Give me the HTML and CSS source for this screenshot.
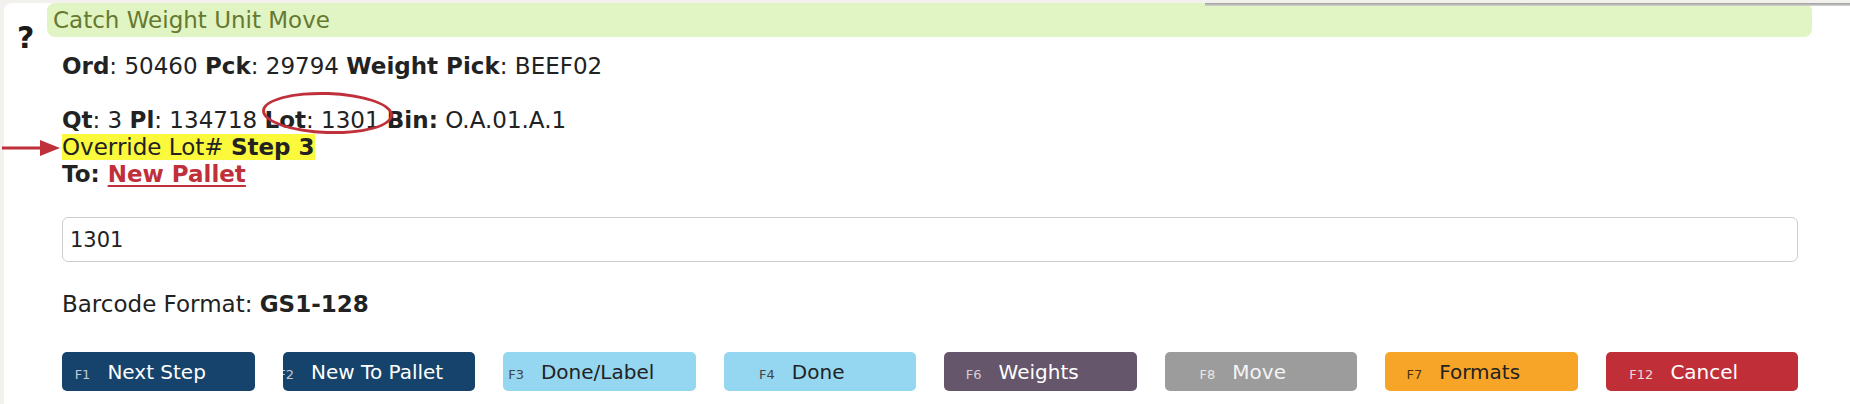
FILE: index.html
```html
<!DOCTYPE html>
<html>
<head>
<meta charset="utf-8">
<title>Catch Weight Unit Move</title>
<link rel="stylesheet" href="styles.css">
</head>
<body>
<div class="page">
  <div class="top-shade"></div>
  <div class="card">
    <div class="help">?</div>
    <div class="main">
      <div class="header">Catch Weight Unit Move</div>
      <div class="body">
        <p class="info"><b>Ord</b>: 50460 <b>Pck</b>: 29794 <b>Weight Pick</b>: BEEF02</p>
        <p class="info2"><b>Qt</b>: 3 <b>Pl</b>: 134718 <span class="circled"><b>Lot</b>: 1301</span> <b>Bin:</b> O.A.01.A.1<br><span class="hl"><svg class="arrow" width="58" height="18" viewBox="0 0 58 18"><line x1="0" y1="9" x2="42" y2="9" stroke="#c0303a" stroke-width="3"/><polygon points="38,1 58,9 38,17" fill="#c0303a"/></svg>Override Lot# <b>Step 3</b></span><br><b>To: <a class="link" href="#">New Pallet</a></b></p>
        <input class="scan" type="text" value="1301">
        <p class="barcode">Barcode Format: <b>GS1-128</b></p>
        <div class="buttons">
          <button class="btn navy"><span class="lbl"><span class="fk">F1</span>Next Step</span></button>
          <button class="btn navy"><span class="lbl"><span class="fk">F2</span>New To Pallet</span></button>
          <button class="btn sky"><span class="lbl"><span class="fk">F3</span>Done/Label</span></button>
          <button class="btn sky"><span class="lbl"><span class="fk">F4</span>Done</span></button>
          <button class="btn plum"><span class="lbl"><span class="fk">F6</span>Weights</span></button>
          <button class="btn grey"><span class="lbl"><span class="fk">F8</span>Move</span></button>
          <button class="btn orange"><span class="lbl"><span class="fk">F7</span>Formats</span></button>
          <button class="btn red"><span class="lbl"><span class="fk">F12</span>Cancel</span></button>
        </div>
      </div>
    </div>
  </div>
</div>
</body>
</html>
```

FILE: styles.css
```css
html, body {
  margin: 0;
  padding: 0;
  background: #f3f1ee;
  height: 100%;
  overflow: hidden;
}

.page {
  position: relative;
  height: 100%;
  font-family: "DejaVu Sans", Verdana, sans-serif;
  color: #222;
}

.top-shade {
  position: absolute;
  top: 0;
  left: 1205px;
  right: 0;
  height: 3px;
  background: linear-gradient(#9c9c9c, #d6d6d2);
  z-index: 2;
}

.card {
  margin: 3px 0 0 4px;
  height: calc(100% - 3px);
  background: #fff;
  border-top-left-radius: 8px;
  display: flex;
}

.help {
  width: 30px;
  padding: 20px 0 0 13px;
  font-size: 30px;
  font-weight: bold;
  line-height: 1;
  color: #1b1b1b;
}

.main {
  flex: 1;
  margin-right: 38px;
}

.header {
  height: 34px;
  line-height: 34px;
  background: #e0f4c4;
  border-radius: 8px;
  padding-left: 6px;
  font-size: 23px;
  color: #66792f;
}

.body {
  padding: 0 14px 0 15px;
  font-size: 23px;
  line-height: 27px;
}

.body p {
  margin: 0;
}

.info {
  padding-top: 16px;
}

.info2 {
  margin-top: 27px !important;
}

.circled {
  position: relative;
}

.circled::after {
  content: "";
  position: absolute;
  left: -2px;
  right: -14px;
  top: -15px;
  bottom: -1px;
  border: 3.5px solid #c0303a;
  border-radius: 50%;
  transform: rotate(2deg);
}

.hl {
  position: relative;
  background: #fbf93c;
}

.arrow {
  position: absolute;
  left: -60px;
  top: 5px;
}

.link {
  color: #c0303a;
  text-decoration: underline;
  text-decoration-thickness: 2px;
  text-underline-offset: 3px;
}

.scan {
  display: block;
  box-sizing: border-box;
  width: 100%;
  height: 45px;
  margin-top: 29px;
  padding: 0 7px;
  border: 1px solid #cfcfcf;
  border-radius: 6px;
  font-family: "DejaVu Sans", Verdana, sans-serif;
  font-size: 21px;
  color: #222;
  outline: none;
}

.barcode {
  margin-top: 29px !important;
}

.buttons {
  margin-top: 34px;
  display: grid;
  grid-template-columns: repeat(8, 1fr);
  column-gap: 28px;
}

.btn {
  height: 39px;
  border: none;
  border-radius: 5px;
  padding: 0 36px 0 0;
  display: flex;
  align-items: center;
  justify-content: center;
  overflow: hidden;
  white-space: nowrap;
  font-family: "DejaVu Sans", Verdana, sans-serif;
  font-size: 20px;
  line-height: 1;
  min-width: 0;
}

.lbl {
  flex: none;
}

.fk {
  font-size: 13px;
  margin-right: 17px;
}

.navy { background: #16436b; color: #fff; }
.navy .fk { color: #c3c9cf; }
.sky { background: #95d6f0; color: #222; }
.sky .fk { color: #444; }
.plum { background: #66566b; color: #fff; }
.plum .fk { color: #d4d0d6; }
.grey { background: #9c9c9c; color: #f4f4f4; }
.grey .fk { color: #e8e8e8; }
.orange { background: #f7a528; color: #222; }
.orange .fk { color: #4a3410; }
.red { background: #c02f38; color: #fff; }
.red .fk { color: #eadada; }
```
